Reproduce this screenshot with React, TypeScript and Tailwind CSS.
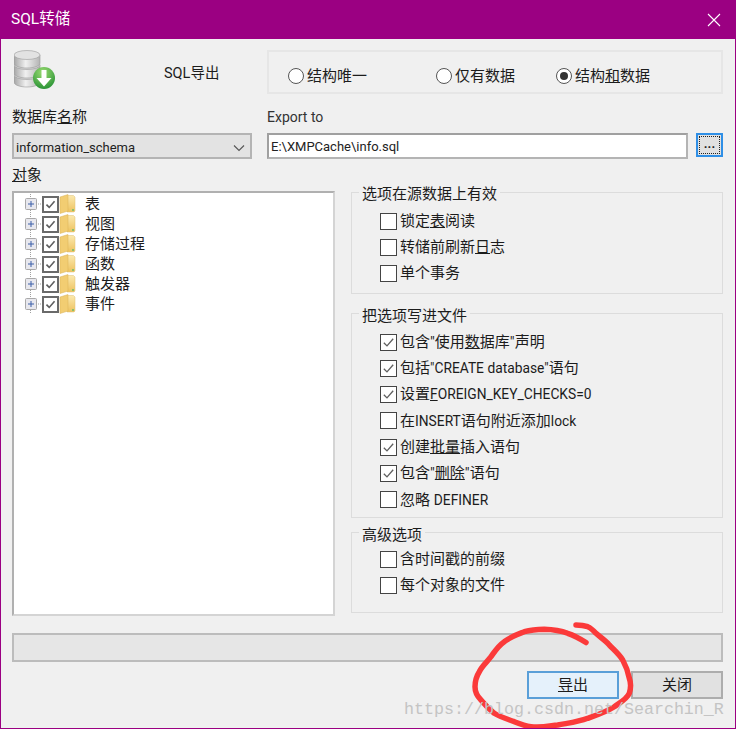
import type { ReactNode } from 'react';

const treeItems = ['表', '视图', '存储过程', '函数', '触发器', '事件'];

function CheckMark({ width = 1.4 }: { width?: number }) {
    return (
        <svg viewBox="0 0 16 16" className="w-full h-full" fill="none" stroke="#5f5f5f" strokeWidth={width}>
            <path d="M3 8.2 6.4 11.6 13 4" />
        </svg>
    );
}

// latin runs are a bit smaller than the cjk text around them
function Lat({ children }: { children: ReactNode }) {
    return <span className="text-[13.8px]">{children}</span>;
}

function CheckRow({ checked, children }: { checked?: boolean; children: ReactNode }) {
    return (
        <div className="flex items-center h-[26.3px] pl-[28px] text-[15px] text-[#1c1c1c] whitespace-nowrap">
            <span className="w-[17px] h-[17px] border border-[#444444] bg-white shrink-0 mr-[3px]">
                {checked && <CheckMark />}
            </span>
            <span>{children}</span>
        </div>
    );
}

function Radio({ label, checked }: { label: ReactNode; checked?: boolean }) {
    return (
        <div className="flex items-center text-[15px] text-[#1c1c1c] whitespace-nowrap">
            <span className="flex items-center justify-center w-[16px] h-[16px] rounded-full border border-[#555555] bg-white mr-[3px]">
                {checked && <span className="w-[8px] h-[8px] rounded-full bg-[#333333]" />}
            </span>
            {label}
        </div>
    );
}

function Group({ title, className, children }: { title: string; className: string; children: ReactNode }) {
    return (
        <fieldset className={`border border-[#dcdcdc] ${className}`}>
            <legend className="ml-[7px] px-[3px] text-[15px] leading-[20px] text-[#1c1c1c]">
                <span className="block translate-y-[2px]">{title}</span>
            </legend>
            {children}
        </fieldset>
    );
}

function DbIcon() {
    return (
        <svg width="42" height="40" viewBox="0 0 42 40" className="shrink-0">
            <defs>
                <linearGradient id="db" x1="0" x2="1" y1="0" y2="0">
                    <stop offset="0" stopColor="#a6a6a6" />
                    <stop offset="0.45" stopColor="#f0f0f0" />
                    <stop offset="1" stopColor="#b4b4b4" />
                </linearGradient>
                <radialGradient id="ball" cx="0.45" cy="0.25" r="0.85">
                    <stop offset="0" stopColor="#9bdc72" />
                    <stop offset="1" stopColor="#1c8a2e" />
                </radialGradient>
            </defs>
            <path d="M0 25v7c0 3 6 5 13 5s13-2 13-5v-7z" fill="url(#db)" stroke="#9a9a9a" strokeWidth="0.6" />
            <ellipse cx="13" cy="25" rx="13" ry="4.5" fill="#d4d4d4" stroke="#9a9a9a" strokeWidth="0.6" />
            <path d="M0 15v8c0 3 6 5 13 5s13-2 13-5v-8z" fill="url(#db)" stroke="#9a9a9a" strokeWidth="0.6" />
            <ellipse cx="13" cy="15" rx="13" ry="4.5" fill="#d4d4d4" stroke="#9a9a9a" strokeWidth="0.6" />
            <path d="M0 5v8c0 3 6 5 13 5s13-2 13-5V5z" fill="url(#db)" stroke="#9a9a9a" strokeWidth="0.6" />
            <ellipse cx="13" cy="5" rx="13" ry="4.5" fill="#e2e2e2" stroke="#9a9a9a" strokeWidth="0.6" />
            <circle cx="30" cy="28" r="11" fill="url(#ball)" />
            <path d="M27.5 20h5v8h5L30 36.5 22.5 28h5z" fill="#ffffff" />
        </svg>
    );
}

function TreeLines() {
    return (
        <svg width="30" height="20" viewBox="0 0 30 20" className="shrink-0">
            <path d="M5.5 0v20M11 10h19" stroke="#a0a0a0" strokeDasharray="1 1" fill="none" />
            <rect x="0.5" y="4.5" width="11" height="11" rx="1" fill="#e8e8ee" stroke="#a9a9a9" />
            <path d="M3 10h6M6 7v6" stroke="#3a5fa8" strokeWidth="1" />
        </svg>
    );
}

function FolderIcon() {
    return (
        <svg width="17" height="20" viewBox="0 0 17 20" className="shrink-0">
            <defs>
                <linearGradient id="fold" x1="0" x2="0" y1="0" y2="1">
                    <stop offset="0" stopColor="#fbe9ae" />
                    <stop offset="1" stopColor="#eec25e" />
                </linearGradient>
            </defs>
            <path d="M8 1.5h6.5L16 3v14l-1 1H8z" fill="url(#fold)" stroke="#dfc074" strokeWidth="0.5" />
            <path d="M1 3 9 0.5 9 17 1 19.5z" fill="#f2cd72" stroke="#d8b25a" strokeWidth="0.5" />
            <rect x="13" y="15" width="2" height="2" fill="#8cc06a" />
        </svg>
    );
}

function Annotation() {
    return (
        <svg className="absolute left-0 top-0 pointer-events-none" width="736" height="729" viewBox="0 0 736 729" fill="none">
            <path
                d="M585 642.5C578 638 572 635 566.7 633.3C558 630 551 629.5 543.3 629.3C536 629.5 530 630 523.3 631.7C515 635 509 637 503.3 641.7C497 646 494 651 490 656.7C486 662 481 666 478.3 671.7C475 677 474 681 474 686.7C474 692 476 696 480 700C484 705 488 709 493.3 713.3C499 717 506 719 513.3 721.7C519 724 524 726 530 726.7C540 728 548 726 556.7 725C567 723 577 722 586.7 718.3C596 715 605 712 613.3 706.7C620 702 626 699 628.3 693.3C630 688 630 683 628.3 678.3C627 671 625 666 621.7 660C618 654 613 650 608.3 645C604 640 599 637 595 633.3C592 630 590 628 586.7 626.7C582 625 578 625 575 625"
                stroke="#fb3a3a"
                strokeWidth="5.5"
                strokeLinecap="round"
                strokeLinejoin="round"
            />
        </svg>
    );
}

export default function App() {
    return (
        <div className="relative flex flex-col w-[736px] h-[729px] overflow-hidden bg-[#f0f0f0] border-x border-b border-[#9b0082] font-['Roboto','Noto_Sans_CJK_SC',sans-serif]">
            <div className="flex items-center justify-between h-[39px] shrink-0 -mx-[1px] pl-[11px] pr-[15px] bg-[#9b0082] text-white text-[15.5px]">
                <span>SQL转储</span>
                <svg width="14" height="14" viewBox="0 0 14 14" stroke="#ffffff" strokeWidth="1.1" fill="none">
                    <path d="M1 1l12 12M13 1L1 13" />
                </svg>
            </div>

            <div className="flex flex-col px-[11px] pr-[12px]">
                <div className="flex mt-[11px] h-[44px]">
                    <div className="flex w-[255px] shrink-0 pl-[2px]">
                        <DbIcon />
                        <span className="ml-[108px] mt-[13px] text-[14.5px] text-[#1c1c1c] whitespace-nowrap">SQL导出</span>
                    </div>
                    <div className="flex-1 flex items-center border-2 border-[#e6e6e6] pl-[19px] pt-[8px]">
                        <div className="w-[148px]"><Radio label="结构唯一" /></div>
                        <div className="w-[120px]"><Radio label="仅有数据" /></div>
                        <Radio checked label={<span>结构<span className="underline">和</span>数据</span>} />
                    </div>
                </div>

                <div className="flex mt-[13px] h-[21px] items-center text-[#1c1c1c]">
                    <span className="w-[255px] shrink-0 text-[15px]">数据库<span className="underline">名</span>称</span>
                    <span className="text-[14px] text-[#333333]">Export to</span>
                </div>

                <div className="flex mt-[5px] items-start">
                    <div className="flex items-center justify-between w-[240px] h-[26px] mr-[15px] pl-[2px] pr-[3px] pt-[3px] border-2 border-[#b4b4b4] bg-[#e3e3e3] text-[13px] text-[#222222]">
                        <span>information_schema</span>
                        <svg width="12" height="8" viewBox="0 0 12 8" fill="none" stroke="#555555" strokeWidth="1.1" className="mr-[2px]">
                            <path d="M1 1.5l5 5 5-5" />
                        </svg>
                    </div>
                    <div className="flex items-center flex-1 h-[26px] px-[2px] pt-[2px] border-2 border-[#a0a0a0] border-b-[#b4b4b4] border-r-[#b4b4b4] bg-white text-[13px] text-[#222222]">
                        E:\XMPCache\info.sql
                    </div>
                    <div className="flex items-center justify-center w-[27px] h-[24px] ml-[8px] border-2 border-[#2f8fe6] bg-[#e1e1e1] text-[13px] font-bold leading-none text-[#222222]">
                        <span className="flex items-end justify-center w-[21px] h-[18px] border border-dotted border-[#222222] pb-[3px]">...</span>
                    </div>
                </div>

                <div className="flex items-start">
                    <div className="w-[323px] shrink-0 mr-[16px]">
                        <div className="flex items-center h-[32px] text-[15px] text-[#1c1c1c]">
                            <span className="underline">对</span>象
                        </div>
                        <div className="h-[425px] pt-[1px] pl-[11px] border-2 border-[#b0b0b0] border-r-[#d4d4d4] border-b-[#d4d4d4] bg-white">
                            {treeItems.map((item) => (
                                <div key={item} className="flex items-center h-[20px] text-[15px] text-[#1c1c1c]">
                                    <TreeLines />
                                    <span className="-ml-[13px] w-[17px] h-[17px] border-2 border-[#6a6a6a] bg-white shrink-0">
                                        <CheckMark width={2} />
                                    </span>
                                    <FolderIcon />
                                    <span className="ml-[9px]">{item}</span>
                                </div>
                            ))}
                        </div>
                    </div>

                    <div className="flex-1 flex flex-col pt-[23px]">
                        <Group title="选项在源数据上有效" className="pb-[6px]">
                            <div className="pt-[6px]">
                                <CheckRow>锁定<span className="underline">表</span>阅读</CheckRow>
                                <CheckRow>转储前刷新<span className="underline">日</span>志</CheckRow>
                                <CheckRow>单个事务</CheckRow>
                            </div>
                        </Group>
                        <Group title="把选项写进文件" className="mt-[10px] pb-[4px]">
                            <div className="pt-[5px]">
                                <CheckRow checked>包含"使用<span className="underline">数</span>据库"声明</CheckRow>
                                <CheckRow checked>包括<Lat>"CREATE database"</Lat>语句</CheckRow>
                                <CheckRow checked>设置<Lat><span className="underline">F</span>OREIGN_KEY_CHECKS=0</Lat></CheckRow>
                                <CheckRow>在<Lat>INSERT</Lat>语句附近添加<Lat>lock</Lat></CheckRow>
                                <CheckRow checked>创建<span className="underline">批量</span>插入语句</CheckRow>
                                <CheckRow checked>包含"<span className="underline">删除</span>"语句</CheckRow>
                                <CheckRow>忽略 <Lat>DEFINER</Lat></CheckRow>
                            </div>
                        </Group>
                        <Group title="高级选项" className="mt-[5px] pb-[13px]">
                            <div className="pt-[3px]">
                                <CheckRow>含时间戳的前缀</CheckRow>
                                <CheckRow>每个对象的文件</CheckRow>
                            </div>
                        </Group>
                    </div>
                </div>

                <div className="h-[29px] mt-[17px] border-2 border-[#bcbcbc] bg-[#e6e6e6]" />

                <div className="flex justify-end gap-[12px] mt-[9px] text-[15px] text-[#1c1c1c]">
                    <button className="w-[92px] h-[28px] border-2 border-[#5a9fd8] bg-[#e5f1fb]">
                        <span className="underline">导</span>出
                    </button>
                    <button className="w-[92px] h-[28px] border-2 border-[#adadad] bg-[#e1e1e1]">关闭</button>
                </div>
            </div>

            <Annotation />
            <span className="absolute left-[403px] top-[700px] font-['Liberation_Mono',monospace] text-[16.67px] leading-[20px] text-[#c4c4c4] whitespace-nowrap pointer-events-none">
                https://blog.csdn.net/Searchin_R
            </span>
        </div>
    );
}
